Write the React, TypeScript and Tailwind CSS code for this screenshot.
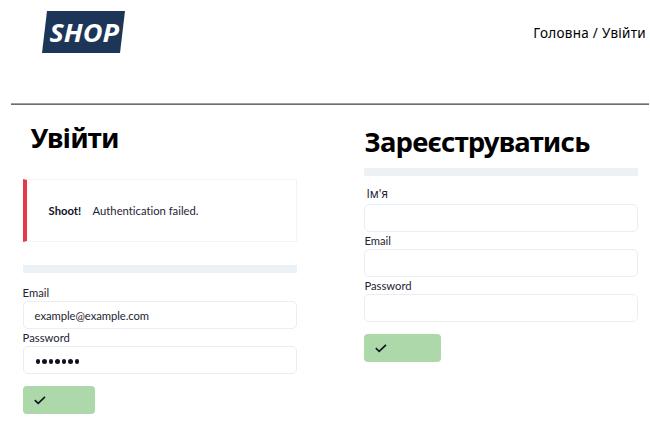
import React from 'react';

const body = "font-['Lato','Liberation_Sans',sans-serif] text-[11.25px] text-[#1d2433] [font-variant-ligatures:none]";
const heading = "font-['Noto_Sans','Open_Sans',sans-serif] font-bold text-black whitespace-nowrap";

function Logo() {
  return (
    <svg className="ml-[42px] mt-[11px] h-[42px] w-[83px]" viewBox="0 0 83 42">
      <polygon points="5,0 83,0 78,42 0,42" fill="#1d3557" />
      <text
        x="7.5"
        y="30.5"
        textLength="69.5"
        lengthAdjust="spacingAndGlyphs"
        fill="#fff"
        className="font-['Open_Sans','Noto_Sans',sans-serif] text-[25px] font-bold italic"
      >
        SHOP
      </text>
    </svg>
  );
}

function Field({ label, children, labelClass = '' }: { label: string; children?: React.ReactNode; labelClass?: string }) {
  return (
    <div>
      <div className={`h-[17px] leading-[17px] ${labelClass}`}>{label}</div>
      <div className="flex h-7 items-center rounded-[5px] border border-[#e9eef5] bg-white pl-[11px]">{children}</div>
    </div>
  );
}

function Submit({ className }: { className: string }) {
  return (
    <button className={`flex h-7 items-center rounded-[4px] bg-[#acd8aa] pl-[11px] ${className}`}>
      <svg className="h-[9px] w-[12px]" viewBox="0 0 12 9" fill="none" stroke="#10131f" strokeWidth="1.6">
        <path d="M0.8 4.2 L4.2 7.4 L11 0.9" />
      </svg>
    </button>
  );
}

export default function App() {
  return (
    <div className={`h-[444px] w-[650px] overflow-hidden bg-white ${body}`}>
      <header className="flex h-[103px] items-start justify-between">
        <Logo />
        <nav className="mr-[4px] mt-[23px] whitespace-nowrap font-['Noto_Sans','Open_Sans',sans-serif] text-[13.5px] leading-5 tracking-[0.29px] text-black">
          Головна / Увійти
        </nav>
      </header>
      <div className="ml-[11px] mr-px h-[2px] border-t border-b border-t-[#a0a0a0] border-b-[#6e6e6e]" />
      <main className="flex">
        <section className="ml-[22.6px] w-[274px]">
          <h1 className={`ml-[7.8px] mt-[13px] h-10 text-[27.5px] leading-10 tracking-[-0.85px] ${heading}`}>Увійти</h1>
          <div className="mt-[21px] flex h-[63px] items-center border border-l-4 border-[#f3f4f6] border-l-[#e63946] pl-[22px] pt-px">
            <strong className="font-bold text-[#10131f]">Shoot!</strong>
            <span className="ml-[11.4px]">Authentication failed.</span>
          </div>
          <div className="mb-[11px] mt-[23px] h-2 bg-[#ecf1f6]" />
          <Field label="Email">
            <span className="pt-[2px] tracking-[-0.05px]">example@example.com</span>
          </Field>
          <Field label="Password">
            <span className="ml-[1px] mt-[3px] flex gap-[2px]">
              {Array.from({ length: 7 }, (_, i) => (
                <i key={i} className="size-[4.5px] rounded-full bg-[#10131f]" />
              ))}
            </span>
          </Field>
          <Submit className="mt-3 w-[72.5px]" />
        </section>
        <section className="ml-[67.8px] w-[274px]">
          <h1 className={`mt-[17px] h-10 text-[27.5px] leading-10 tracking-[-0.75px] ${heading}`}>Зареєструватись</h1>
          <div className="mb-[11px] mt-[6px] h-2 bg-[#ecf1f6]" />
          <Field label="Ім'я" labelClass="relative -top-[2px] pl-[2px] font-['Noto_Sans','Open_Sans',sans-serif] text-[11.7px]" />
          <Field label="Email" />
          <Field label="Password" />
          <Submit className="mt-3 w-[76.5px]" />
        </section>
      </main>
    </div>
  );
}
